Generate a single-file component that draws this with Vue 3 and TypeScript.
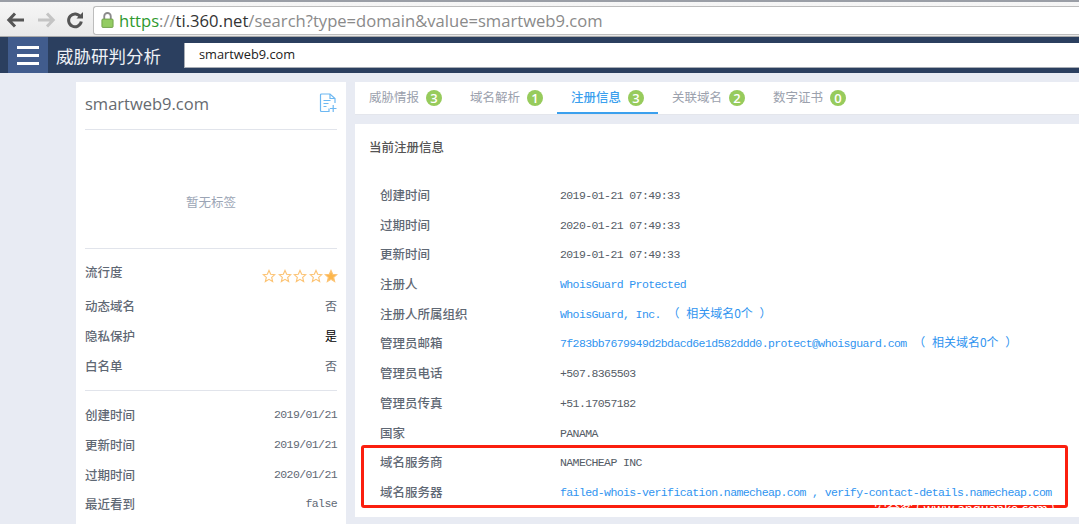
<template>
  <div class="page">
    <header class="chrome">
      <svg class="nav-btn" width="20" height="20" viewBox="0 0 20 20">
        <path d="M9 3.500 2.800 10 9 16.500M3.500 10H18" fill="none" stroke="#555" stroke-width="3" />
      </svg>
      <svg class="nav-btn" width="20" height="20" viewBox="0 0 20 20">
        <path d="M11 3.500 17.200 10 11 16.500M16.500 10H2" fill="none" stroke="#c4c4c4" stroke-width="3" />
      </svg>
      <svg class="nav-btn" width="20" height="20" viewBox="0 0 20 20">
        <path d="M15.500 7A6.400 6.400 0 1 0 16.300 11.500" fill="none" stroke="#555" stroke-width="3" />
        <path d="M11.500 8.500H18V2Z" fill="#555" />
      </svg>
      <div class="url-box">
        <svg width="13" height="18" viewBox="0 0 14 18">
          <path d="M3.500 8V5a3.500 3.500 0 0 1 7 0v3" fill="none" stroke="#8a8a8a" stroke-width="2" />
          <rect x="1" y="8" width="12" height="9" rx="1" fill="#93cc62" stroke="#6f9f48" />
        </svg>
        <span class="url"><span class="url-green">https</span>://<span class="url-host">ti.360.net</span>/search?type=domain&amp;value=smartweb9.com</span>
      </div>
    </header>

    <nav class="topbar">
      <div class="menu-btn">
        <span></span>
        <span></span>
        <span></span>
      </div>
      <div class="brand">威胁研判分析</div>
      <div class="search">smartweb9.com</div>
    </nav>

    <main class="main">
      <aside class="side">
        <div class="side-head">
          <span class="side-domain">smartweb9.com</span>
          <svg width="18" height="20" viewBox="0 0 18 20" fill="none" stroke="#6db8f2" stroke-width="1.200">
            <path d="M10 15.500V18.500H2.500a1 1 0 0 1-1-1V2a1 1 0 0 1 1-1H11l5 4.500V10" />
            <path d="M11 1v4.500h5M4.500 7.500h7M4.500 10.500h5M4.500 13.500h3M11 15.500h6.500M14.200 12v7" />
          </svg>
        </div>
        <div class="no-tag">暂无标签</div>
        <div class="side-group">
          <div class="side-row rate-row">
            <span class="side-label rate-label">流行度</span>
            <span class="stars">
              <svg v-for="n in 5" :key="n" width="14" height="14" viewBox="0 0 24 24">
                <path
                  d="M12 2.500 14.900 9l7 .7-5.300 4.700 1.600 7L12 17.700l-6.200 3.700 1.600-7L2.100 9.700l7-.7Z"
                  :fill="n === 5 ? '#fcb64b' : 'none'"
                  stroke="#fcc476"
                  stroke-width="2"
                />
              </svg>
            </span>
          </div>
          <div v-for="row in flags" :key="row.label" class="side-row">
            <span class="side-label">{{ row.label }}</span>
            <span class="side-value" :class="{ strong: row.strong }">{{ row.value }}</span>
          </div>
        </div>
        <div class="side-group dates">
          <div v-for="row in dates" :key="row.label" class="side-row">
            <span class="side-label">{{ row.label }}</span>
            <span class="side-value mono">{{ row.value }}</span>
          </div>
        </div>
      </aside>

      <div class="right">
        <div class="tabs">
          <div v-for="tab in tabs" :key="tab.name" class="tab" :class="{ active: tab.active }">
            {{ tab.name }}<span class="badge">{{ tab.count }}</span>
          </div>
        </div>
        <section class="content">
          <h3 class="title">当前注册信息</h3>
          <div class="rows">
            <div v-for="row in rows" :key="row.label" class="row">
              <span class="row-label">{{ row.label }}</span>
              <span class="row-value" :class="{ link: row.link }">
                <template v-for="(part, i) in row.value" :key="i">
                  <span :class="i % 2 ? 'cjk' : 'mono'">{{ part }}</span>
                </template>
              </span>
            </div>
          </div>
        </section>
      </div>
    </main>

    <div class="highlight"></div>
    <div class="watermark">安全客 ( www.anquanke.com )</div>
  </div>
</template>

<script setup lang="ts">
interface InfoRow {
  label: string;
  value: string[];
  link?: boolean;
}

const flags = [
  { label: '动态域名', value: '否' },
  { label: '隐私保护', value: '是', strong: true },
  { label: '白名单', value: '否' },
];

const dates = [
  { label: '创建时间', value: '2019/01/21' },
  { label: '更新时间', value: '2019/01/21' },
  { label: '过期时间', value: '2020/01/21' },
  { label: '最近看到', value: 'false' },
];

const tabs = [
  { name: '威胁情报', count: 3 },
  { name: '域名解析', count: 1 },
  { name: '注册信息', count: 3, active: true },
  { name: '关联域名', count: 2 },
  { name: '数字证书', count: 0 },
];

const rows: InfoRow[] = [
  { label: '创建时间', value: ['2019-01-21 07:49:33'] },
  { label: '过期时间', value: ['2020-01-21 07:49:33'] },
  { label: '更新时间', value: ['2019-01-21 07:49:33'] },
  { label: '注册人', value: ['WhoisGuard Protected'], link: true },
  { label: '注册人所属组织', value: ['WhoisGuard, Inc.', ' （ 相关域名0个 ）'], link: true },
  {
    label: '管理员邮箱',
    value: ['7f283bb7679949d2bdacd6e1d582ddd0.protect@whoisguard.com', ' （ 相关域名0个 ）'],
    link: true,
  },
  { label: '管理员电话', value: ['+507.8365503'] },
  { label: '管理员传真', value: ['+51.17057182'] },
  { label: '国家', value: ['PANAMA'] },
  { label: '域名服务商', value: ['NAMECHEAP INC'] },
  {
    label: '域名服务器',
    value: ['failed-whois-verification.namecheap.com , verify-contact-details.namecheap.com'],
    link: true,
  },
];
</script>

<style>
html,
body {
  margin: 0;
  height: 100%;
  overflow: hidden;
}
</style>

<style scoped>
.page {
  position: relative;
  display: flex;
  flex-direction: column;
  height: 524px;
  overflow: hidden;
  background: #e8ebf3;
  font-family: "Noto Sans CJK SC", "Liberation Sans", sans-serif;
}

.chrome {
  display: flex;
  align-items: center;
  flex: none;
  box-sizing: border-box;
  height: 37px;
  padding: 2px 0 0 6px;
  gap: 3px;
  background: linear-gradient(#f6f6f6, #e9e9e9);
  border-top: 2px solid #9a9ea6;
  border-bottom: 1px solid #a9a9a9;
}

.nav-btn {
  flex: none;
  width: 20px;
  margin-right: 6.500px;
}

.url-box {
  display: flex;
  align-items: center;
  flex: 1;
  gap: 5px;
  height: 27px;
  margin-left: -1.500px;
  padding-left: 7px;
  background: #fff;
  border: 1px solid #bdbdbd;
  border-right: none;
  border-radius: 3px 0 0 3px;
}

.url {
  font-family: "Open Sans", "Liberation Sans", sans-serif;
  font-size: 16.600px;
  color: #8a8a8a;
  white-space: nowrap;
}

.url-green {
  color: #2f9a2f;
}

.url-host {
  color: #333;
}

.topbar {
  display: flex;
  align-items: center;
  flex: none;
  height: 36px;
  background: #2b3f5f;
}

.menu-btn {
  display: flex;
  flex-direction: column;
  justify-content: center;
  gap: 5px;
  box-sizing: border-box;
  width: 40px;
  height: 36px;
  margin-left: 8px;
  padding: 0 9px;
  background: #415c8d;
}

.menu-btn span {
  height: 3px;
  background: #fff;
}

.brand {
  width: 136px;
  padding-left: 8px;
  box-sizing: border-box;
  font-size: 17.500px;
  color: #eef1f6;
}

.search {
  flex: 1;
  box-sizing: border-box;
  height: 25px;
  padding-left: 14px;
  line-height: 23px;
  font-family: "Open Sans", "Liberation Sans", sans-serif;
  font-size: 12.800px;
  color: #222;
  background: #fff;
  border-left: 1px solid #a8adb5;
  border-bottom: 1px solid #a8adb5;
}

.main {
  display: flex;
  flex: 1;
  gap: 9px;
  min-height: 0;
  padding: 9px 0 0 76px;
}

.side {
  flex: none;
  box-sizing: border-box;
  width: 270px;
  padding: 0 9px;
  background: #fff;
}

.side-head {
  display: flex;
  align-items: center;
  justify-content: space-between;
  box-sizing: border-box;
  height: 48px;
  padding-bottom: 5px;
  border-bottom: 1px solid #e1e4eb;
}

.side-domain {
  font-family: "Open Sans", "Liberation Sans", sans-serif;
  font-size: 16.500px;
  color: #666a70;
}

.no-tag {
  height: 119px;
  line-height: 144px;
  box-sizing: border-box;
  text-align: center;
  font-size: 12.500px;
  color: #9ba5b5;
  border-bottom: 1px solid #e1e4eb;
}

.side-group {
  padding-bottom: 10px;
  border-bottom: 1px solid #e1e4eb;
}

.side-group.dates {
  padding-top: 9px;
  border-bottom: none;
}

.side-row {
  display: flex;
  align-items: center;
  justify-content: space-between;
  height: 29.700px;
}

.rate-row {
  height: 42px;
}

.rate-label {
  margin-top: 3px;
}

.stars {
  display: flex;
  gap: 1.500px;
  margin: 11px -1px 0 0;
}

.side-label {
  font-size: 12.500px;
  font-weight: 500;
  color: #5f6874;
}

.side-value {
  font-size: 12px;
  color: #5f6874;
}

.side-value.strong {
  color: #000;
}

.mono {
  font-family: "Liberation Mono", "Noto Sans CJK SC", monospace;
  font-size: 11.500px;
  letter-spacing: -0.600px;
  white-space: pre;
}

.side-value.mono {
  color: #5f6874;
}

.right {
  display: flex;
  flex: 1;
  flex-direction: column;
  gap: 10px;
  min-width: 0;
}

.tabs {
  display: flex;
  flex: none;
  height: 32px;
  background: #fff;
  box-shadow: 0 1px 0 #e4e6ec;
}

.tab {
  display: flex;
  align-items: center;
  gap: 7px;
  box-sizing: border-box;
  width: 101px;
  height: 32px;
  padding: 0 0 3px 14px;
  font-size: 12.500px;
  color: #9ba1ad;
  white-space: nowrap;
}

.tab.active {
  color: #3ba0ee;
  font-weight: 500;
  border-bottom: 2px solid #3ba0ee;
  padding-bottom: 1px;
}

.badge {
  display: inline-flex;
  align-items: center;
  justify-content: center;
  width: 16px;
  height: 16px;
  margin: 3px 0 0 0;
  border-radius: 50%;
  font-family: "Open Sans", "Liberation Sans", sans-serif;
  font-size: 13px;
  font-weight: 600;
  color: #fff;
  background: #97cb5c;
}

.content {
  flex: none;
  box-sizing: border-box;
  height: 393px;
  padding: 0 0 0 14px;
  background: #fff;
}

.title {
  margin: 0;
  height: 55.500px;
  line-height: 46px;
  font-size: 12.500px;
  font-weight: 500;
  color: #555;
}

.rows {
  padding-left: 11px;
}

.row {
  display: flex;
  align-items: center;
  height: 29.720px;
}

.row-label {
  flex: none;
  width: 180px;
  font-size: 12.500px;
  font-weight: 500;
  color: #5f6874;
}

.row-value {
  margin-bottom: 2px;
  font-size: 12px;
  color: #555c66;
  white-space: pre;
}

.row-value.link {
  color: #2f94f0;
}

.cjk {
  font-size: 12px;
  word-spacing: 4px;
}

.highlight {
  position: absolute;
  left: 361px;
  top: 445px;
  width: 701px;
  height: 57px;
  border: 3px solid #fb1f0f;
  border-radius: 3px;
}

.watermark {
  position: absolute;
  right: 24px;
  top: 499px;
  font-size: 13px;
  line-height: 18px;
  color: #fff;
  white-space: nowrap;
}
</style>
